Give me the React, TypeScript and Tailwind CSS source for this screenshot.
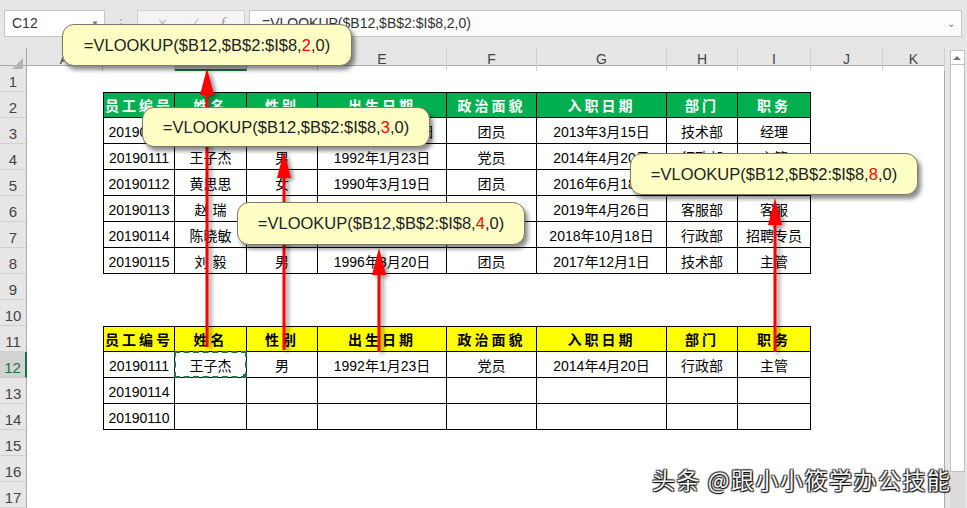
import React from 'react';

const COLS = ['A', 'B', 'C', 'D', 'E', 'F', 'G', 'H', 'I', 'J', 'K'];
const GRID = 'grid grid-cols-[27px_76px_72px_72px_71px_129px_90px_130px_71px_73px_72px_62px]';

const HEAD = ['员工编号', '姓名', '性别', '出生日期', '政治面貌', '入职日期', '部门', '职务'];

const TABLE1 = [
  ['20190110', '李晓丽', '女', '1989年10月15日', '团员', '2013年3月15日', '技术部', '经理'],
  ['20190111', '王子杰', '男', '1992年1月23日', '党员', '2014年4月20日', '行政部', '主管'],
  ['20190112', '黄思思', '女', '1990年3月19日', '团员', '2016年6月18日', '财务部', '会计'],
  ['20190113', '赵 瑞', '男', '1994年8月12日', '团员', '2019年4月26日', '客服部', '客服'],
  ['20190114', '陈晓敏', '女', '1995年11月2日', '党员', '2018年10月18日', '行政部', '招聘专员'],
  ['20190115', '刘 毅', '男', '1996年3月20日', '团员', '2017年12月1日', '技术部', '主管'],
];

const TABLE2 = [
  ['20190111', '王子杰', '男', '1992年1月23日', '党员', '2014年4月20日', '行政部', '主管'],
  ['20190114', '', '', '', '', '', '', ''],
  ['20190110', '', '', '', '', '', '', ''],
];

const CALLOUTS = [
  { left: 62, top: 24, w: 290, h: 42, n: '2' },
  { left: 142, top: 107, w: 288, h: 40, n: '3' },
  { left: 237, top: 202, w: 288, h: 43, n: '4' },
  { left: 630, top: 153, w: 288, h: 42, n: '8' },
];

const ARROWS = [
  { x: 207, tip: 68, end: 347 },
  { x: 284, tip: 151, end: 350 },
  { x: 379, tip: 248, end: 352 },
  { x: 775, tip: 198, end: 352 },
];

function rowContent(r: number): { kind: 'none' | 'green' | 'yellow' | 'data'; cells: string[] } {
  if (r === 2) return { kind: 'green', cells: HEAD };
  if (r >= 3 && r <= 8) return { kind: 'data', cells: TABLE1[r - 3] };
  if (r === 11) return { kind: 'yellow', cells: HEAD };
  if (r >= 12 && r <= 14) return { kind: 'data', cells: TABLE2[r - 12] };
  return { kind: 'none', cells: [] };
}

function Arrow({ x, tip, end }: { x: number; tip: number; end: number }) {
  const h = end - tip;
  return (
    <svg
      className="absolute drop-shadow-[3px_2px_2px_rgba(0,0,0,0.45)]"
      style={{ left: x - 8, top: tip, width: 16, height: h }}
      viewBox={`0 0 16 ${h}`}
    >
      <polygon points="8,0 1,27 15,27" fill="#ff0000" />
      <rect x="6.5" y="20" width="3" height={h - 20} fill="#ff0000" />
    </svg>
  );
}

export default function App() {
  const rows = Array.from({ length: 17 }, (_, i) => i + 1);

  return (
    <div className="relative w-[967px] h-[508px] overflow-hidden bg-[#e6e6e6] font-['Liberation_Sans','Noto_Sans_CJK_SC',sans-serif]">
      {/* formula bar */}
      <div className="h-[48px] flex items-start pt-[10px] pl-[4px]">
        <div className="w-[101px] h-[27px] bg-white border border-[#c6c6c6] flex items-center justify-between pl-[7px] pr-[5px]">
          <span className="text-[14px] text-[#333]">C12</span>
          <span className="text-[8px] text-[#777]">▼</span>
        </div>
        <div className="w-[32px] h-[27px] flex items-center justify-center text-[12px] text-[#aaa]">⋮</div>
        <div className="w-[108px] h-[27px] bg-[#f4f4f4] border border-[#d0d0d0] flex items-center justify-around px-2 text-[13px] text-[#bdbdbd]">
          <span>✕</span>
          <span>✓</span>
          <span className="italic font-['Liberation_Serif',serif] text-[15px] text-[#999]">f</span>
        </div>
        <div className="ml-[4px] w-[713px] h-[27px] bg-[#fdfdfd] border border-[#c6c6c6] flex items-center justify-between pl-[12px] pr-[6px]">
          <span className="text-[14px] text-[#333]">=VLOOKUP($B12,$B$2:$I$8,2,0)</span>
          <span className="text-[10px] text-[#777]">⌄</span>
        </div>
      </div>

      <div className="flex">
        {/* sheet */}
        <div className="w-[945px] bg-white border-r border-[#ababab]">
          <div className={`${GRID} h-[18px] bg-[#e6e6e6] border-b border-[#ababab]`}>
            <div className="relative border-r border-[#ababab]">
              <div className="absolute right-[3px] bottom-[2px] w-0 h-0 border-l-[11px] border-l-transparent border-b-[11px] border-b-[#b4b4b4]" />
            </div>
            {COLS.map(c => (
              <div
                key={c}
                className={
                  c === 'C'
                    ? 'flex items-center justify-center text-[14px] text-[#217346] bg-[#d2d2d2] border-r border-[#ababab] border-b-2 border-b-[#217346]'
                    : 'flex items-center justify-center text-[14px] text-[#444] border-r border-[#d0d0d0]'
                }
              >
                {c}
              </div>
            ))}
          </div>

          {rows.map(r => {
            const { kind, cells } = rowContent(r);
            const top = r === 2 || r === 11;
            return (
              <div key={r} className={`${GRID} h-[26px]`}>
                <div
                  className={
                    r === 12
                      ? 'flex items-end justify-center pb-[2px] leading-none text-[15px] text-[#217346] bg-[#d2d2d2] border-b border-[#c8c8c8] border-r-2 border-r-[#217346]'
                      : 'flex items-end justify-center pb-[2px] leading-none text-[15px] text-[#444] bg-[#e6e6e6] border-b border-[#d0d0d0] border-r border-r-[#ababab]'
                  }
                >
                  {r}
                </div>
                <div />
                {kind === 'none'
                  ? COLS.slice(1, 9).map(c => <div key={c} />)
                  : cells.map((t, i) => (
                      <div
                        key={i}
                        className={[
                          'relative flex items-center justify-center pt-[3px] whitespace-nowrap border-r border-b border-black text-[14px]',
                          i === 0 ? 'border-l' : '',
                          top ? 'border-t' : '',
                          kind === 'green' ? 'bg-[#00b050] text-white font-bold tracking-[3px]' : '',
                          kind === 'yellow' ? 'bg-[#ffff00] text-black font-bold tracking-[3px]' : '',
                          kind === 'data' ? 'bg-white text-black' : '',
                          kind !== 'data' && i === 0 ? 'tracking-[1px]' : '',
                        ].join(' ')}
                      >
                        {t}
                        {r === 12 && i === 1 && (
                          <div className="absolute -left-px -top-px -right-px -bottom-px border-2 border-dashed border-[#217346]">
                            <div className="absolute -right-[3px] -bottom-[3px] w-[5px] h-[5px] bg-[#217346]" />
                          </div>
                        )}
                      </div>
                    ))}
                <div />
                <div />
              </div>
            );
          })}
        </div>

        {/* vertical scrollbar */}
        <div className="w-[22px] flex flex-col items-center pt-[2px] pl-[2px]">
          <div className="w-[15px] h-[15px] bg-white border border-[#c0c0c0] flex items-center justify-center">
            <div className="w-0 h-0 border-l-[4px] border-l-transparent border-r-[4px] border-r-transparent border-b-[4px] border-b-[#777]" />
          </div>
          <div className="w-[15px] h-[407px] bg-white border border-[#c0c0c0] border-t-0" />
          <div className="w-[15px] flex-1 bg-[#dcdcdc]" />
        </div>
      </div>

      {/* arrows */}
      {ARROWS.map((a, i) => (
        <Arrow key={i} {...a} />
      ))}

      {/* callouts */}
      {CALLOUTS.map((c, i) => (
        <div
          key={i}
          className="absolute flex items-center justify-center rounded-[12px] bg-[#ffffc5] border border-[#7a7a6a] shadow-[3px_4px_4px_rgba(0,0,0,0.45)] text-[16.5px] text-[#222] whitespace-nowrap"
          style={{ left: c.left, top: c.top, width: c.w, height: c.h }}
        >
          =VLOOKUP($B12,$B$2:$I$8,<span className="text-[#ff0000]">{c.n}</span>,0)
        </div>
      ))}

      {/* watermark */}
      <div className="absolute left-[652px] top-[462px] text-[23px] tracking-[1.5px] text-[#f6f6f6] font-['Noto_Sans_CJK_SC',sans-serif] [text-shadow:1px_1px_1px_#000,-1px_-1px_1px_#333,1px_-1px_1px_#333,-1px_1px_1px_#333]">
        头条 @跟小小筱学办公技能
      </div>
    </div>
  );
}
